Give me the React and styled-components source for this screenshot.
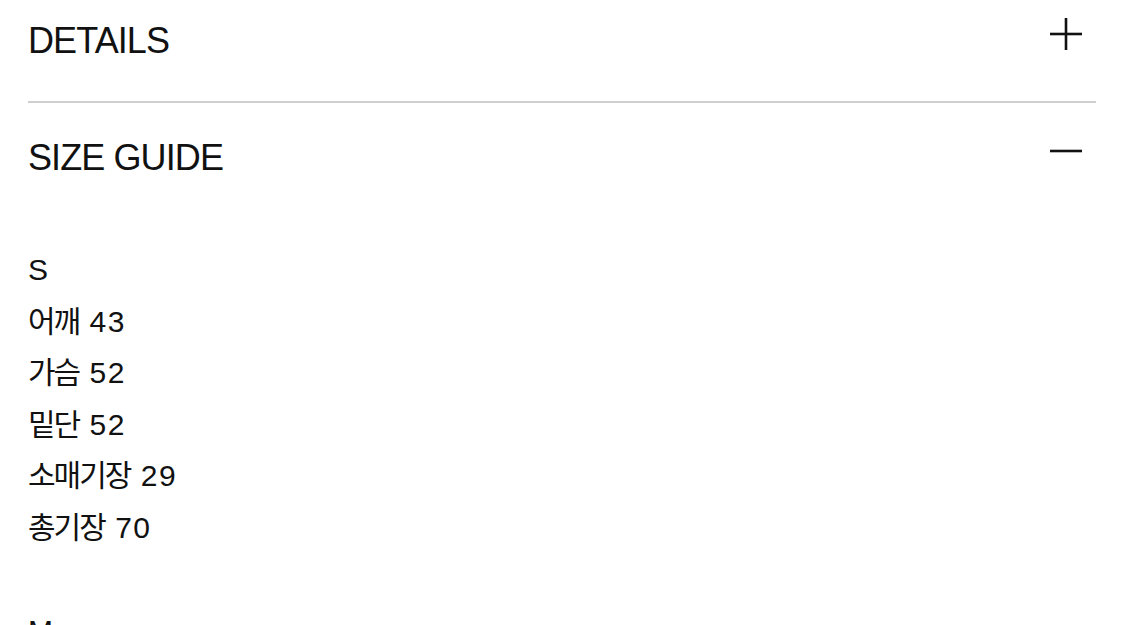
import React from "react";
import styled, { createGlobalStyle } from "styled-components";

const Global = createGlobalStyle`
  html, body { margin: 0; padding: 0; background: #fff; overflow: hidden; }
  body { font-family: "Liberation Sans", "Noto Sans CJK KR", Arial, sans-serif; color: #111; }
`;

const Viewport = styled.div`
  height: 100vh;
  overflow: hidden;
`;

const Page = styled.div`
  margin-top: -14px;
  padding: 0 29px 0 28px;
`;

const Section = styled.section`
  border-bottom: ${(p) => (p.$last ? "none" : "2px solid #cfcfcf")};
`;

const Header = styled.div`
  display: flex;
  justify-content: space-between;
  align-items: flex-start;
  padding: 35px 14px 40px 0;
`;

const Title = styled.h2`
  margin: 0;
  font-size: 36px;
  line-height: 40px;
  font-weight: 400;
  letter-spacing: -0.9px;
`;

const IconBox = styled.svg`
  width: 32px;
  height: 32px;
  margin-top: -3px;
  flex: none;
`;

const Content = styled.div`
  padding-top: 26px;
`;

const Line = styled.div`
  font-size: 30px;
  line-height: 51.6px;
  height: 51.6px;
  white-space: nowrap;
`;

const Label = styled.span`
  font-family: "Liberation Sans", "Noto Sans CJK KR", sans-serif;
  letter-spacing: -2px;
  margin-right: 2px;
`;

const Value = styled.span`
  letter-spacing: 1.5px;
`;

const Toggle = ({ open }) => (
  <IconBox viewBox="0 0 32 32" fill="none" stroke="#111" strokeWidth="2.6">
    <line x1="0" y1="16" x2="32" y2="16" />
    {!open && <line x1="16" y1="0" x2="16" y2="32" />}
  </IconBox>
);

const sizes = [
  ["어깨", "43"],
  ["가슴", "52"],
  ["밑단", "52"],
  ["소매기장", "29"],
  ["총기장", "70"],
];

export default function App() {
  return (
    <Viewport>
      <Global />
      <Page>
        <Section>
          <Header>
            <Title>DETAILS</Title>
            <Toggle open={false} />
          </Header>
        </Section>
        <Section $last>
          <Header>
            <Title>SIZE GUIDE</Title>
            <Toggle open />
          </Header>
          <Content>
            <Line>S</Line>
            {sizes.map(([k, v]) => (
              <Line key={k}>
                <Label>{k}</Label> <Value>{v}</Value>
              </Line>
            ))}
            <Line />
            <Line>M</Line>
          </Content>
        </Section>
      </Page>
    </Viewport>
  );
}
